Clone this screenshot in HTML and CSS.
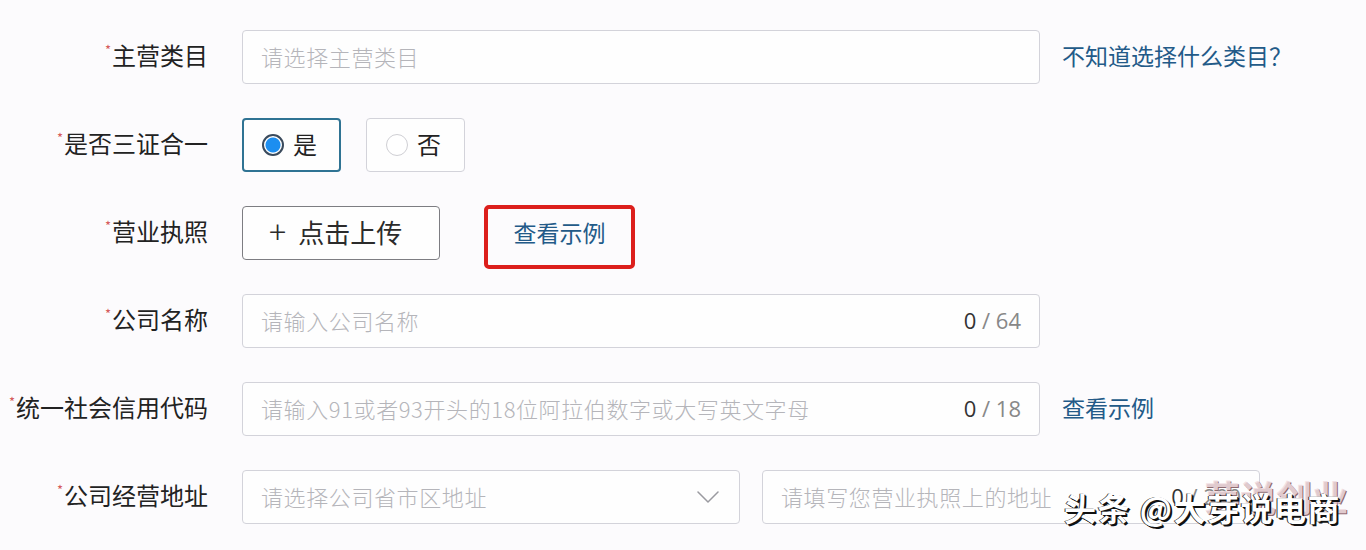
FILE: index.html
```html
<!DOCTYPE html>
<html lang="zh-CN">
<head>
  <meta charset="UTF-8">
  <meta name="viewport" content="width=device-width, initial-scale=1.0">
  <title>企业入驻 - 资质信息</title>
  <link rel="stylesheet" href="styles.css">
</head>
<body>
  <form class="form">
    <div class="form-row">
      <label class="form-label"><span class="required">*</span>主营类目</label>
      <div class="form-field">
        <div class="input wide"><span class="placeholder">请选择主营类目</span></div>
        <a class="link" href="#">不知道选择什么类目？</a>
      </div>
    </div>

    <div class="form-row">
      <label class="form-label"><span class="required">*</span>是否三证合一</label>
      <div class="form-field">
        <div class="radio-group">
          <div class="radio checked"><span class="radio-dot"></span>是</div>
          <div class="radio"><span class="radio-dot"></span>否</div>
        </div>
      </div>
    </div>

    <div class="form-row">
      <label class="form-label"><span class="required">*</span>营业执照</label>
      <div class="form-field">
        <button type="button" class="upload-btn"><span class="plus">+</span>点击上传</button>
        <a class="link example-box" href="#">查看示例</a>
      </div>
    </div>

    <div class="form-row">
      <label class="form-label"><span class="required">*</span>公司名称</label>
      <div class="form-field">
        <div class="input wide">
          <span class="placeholder">请输入公司名称</span>
          <span class="counter"><b>0</b> / 64</span>
        </div>
      </div>
    </div>

    <div class="form-row">
      <label class="form-label"><span class="required">*</span>统一社会信用代码</label>
      <div class="form-field">
        <div class="input wide">
          <span class="placeholder">请输入91或者93开头的18位阿拉伯数字或大写英文字母</span>
          <span class="counter"><b>0</b> / 18</span>
        </div>
        <a class="link" href="#">查看示例</a>
      </div>
    </div>

    <div class="form-row">
      <label class="form-label"><span class="required">*</span>公司经营地址</label>
      <div class="form-field">
        <div class="input half">
          <span class="placeholder">请选择公司省市区地址</span>
          <svg class="chevron" width="22" height="12" viewBox="0 0 22 12" fill="none" stroke="currentColor" stroke-width="1.5">
            <path d="M1 1l10 10 10-10" stroke-linecap="round" stroke-linejoin="round"/>
          </svg>
        </div>
        <div class="input half">
          <span class="placeholder">请填写您营业执照上的地址</span>
          <span class="counter"><b>0</b> / 200</span>
        </div>
      </div>
    </div>
  </form>

  <div class="watermark">
    <span class="ghost">芽说创业</span>
    <span class="mark">头条 @大芽说电商</span>
  </div>
</body>
</html>
```

FILE: styles.css
```css
:root {
  --text-primary: #222222;
  --text-placeholder: #b5b5ba;
  --border-color: #d3d3da;
  --link-color: #235a88;
  --radio-active: #2f7393;
  --radio-dot: #1c8ef0;
  --annotation-red: #dc1f1c;
  --background-color: #fcfbfd;
}

* {
  box-sizing: border-box;
  margin: 0;
  padding: 0;
}

body {
  width: 1366px;
  height: 550px;
  overflow: hidden;
  position: relative;
  font-family: "Noto Sans CJK SC", "Noto Sans", sans-serif;
  background-color: var(--background-color);
  color: var(--text-primary);
}

.form {
  display: flex;
  flex-direction: column;
  gap: 34px;
  padding-top: 30px;
}

.form-row {
  display: flex;
  align-items: center;
  height: 54px;
}

.form-label {
  width: 210px;
  flex-shrink: 0;
  text-align: right;
  font-size: 24px;
  line-height: 1;
  color: var(--text-primary);
  padding-right: 2px;
  padding-bottom: 4px;
  white-space: nowrap;
}

.required {
  color: #d55a5a;
  font-size: 13px;
  vertical-align: 10px;
  margin-right: 1px;
}

.form-field {
  display: flex;
  align-items: center;
  margin-left: 32px;
  gap: 22px;
  height: 100%;
}

.input {
  height: 54px;
  border: 1px solid var(--border-color);
  border-radius: 4px;
  background-color: #fefefe;
  display: flex;
  align-items: center;
  justify-content: space-between;
  padding: 0 18px 3px;
  font-size: 22px;
}

.input.wide {
  width: 798px;
}

.input.half {
  width: 498px;
}

.placeholder {
  color: var(--text-placeholder);
  font-weight: 300;
  white-space: nowrap;
  letter-spacing: 0.6px;
}

.counter {
  color: #888888;
  font-family: "Open Sans", "Noto Sans", sans-serif;
  font-size: 22px;
  white-space: nowrap;
}

.counter b {
  font-weight: 400;
  color: #333333;
}

.chevron {
  color: #9a9aa0;
  margin-right: 2px;
  margin-top: 3px;
}

.link {
  color: var(--link-color);
  text-decoration: none;
  font-size: 23px;
  white-space: nowrap;
  padding-bottom: 4px;
}

.radio-group {
  display: flex;
  gap: 25px;
}

.radio {
  width: 99px;
  height: 54px;
  border: 1px solid var(--border-color);
  border-radius: 4px;
  background-color: #fefefe;
  display: flex;
  align-items: center;
  padding: 0 0 3px 19px;
  gap: 9px;
  font-size: 24px;
}

.radio-dot {
  width: 22px;
  height: 22px;
  border-radius: 50%;
  border: 1px solid #cfcfd4;
  background: #ffffff;
  flex-shrink: 0;
  margin-top: 3px;
}

.radio.checked {
  border: 2px solid var(--radio-active);
  padding-left: 18px;
}

.radio.checked .radio-dot {
  border: 2px solid #3a4a5c;
  background: radial-gradient(circle, var(--radio-dot) 0 7px, #ffffff 8px);
}

.upload-btn {
  width: 198px;
  height: 54px;
  border: 1px solid #7d7d82;
  border-radius: 4px;
  background-color: #fefefe;
  font-family: inherit;
  font-size: 26px;
  color: #2b2b2b;
  display: flex;
  align-items: center;
  padding: 0 0 4px 26px;
  gap: 12px;
  cursor: pointer;
}

.plus {
  font-size: 32px;
  font-weight: 300;
  line-height: 1;
  margin-top: -2px;
}

.example-box {
  margin-left: 22px;
  width: 151px;
  height: 64px;
  margin-top: 8px;
  border: 4px solid var(--annotation-red);
  border-radius: 5px;
  display: flex;
  align-items: center;
  justify-content: center;
  padding-bottom: 10px;
}

.watermark {
  position: absolute;
  left: 1064px;
  top: 484px;
  width: 302px;
  height: 56px;
  pointer-events: none;
}

.mark {
  position: absolute;
  left: 0;
  top: 0;
  font-size: 32px;
  font-weight: 700;
  color: #ffffff;
  white-space: nowrap;
  letter-spacing: 1.5px;
  text-shadow: 1px 1px 0 #111, 2px 2px 0 #111, -1px 0 0 #333;
}

.ghost {
  position: absolute;
  left: 140px;
  top: -14px;
  font-size: 36px;
  font-weight: 700;
  color: rgba(240, 220, 224, 0.85);
  white-space: nowrap;
  text-shadow: 1px 1px 0 #8e6b70;
}
```
